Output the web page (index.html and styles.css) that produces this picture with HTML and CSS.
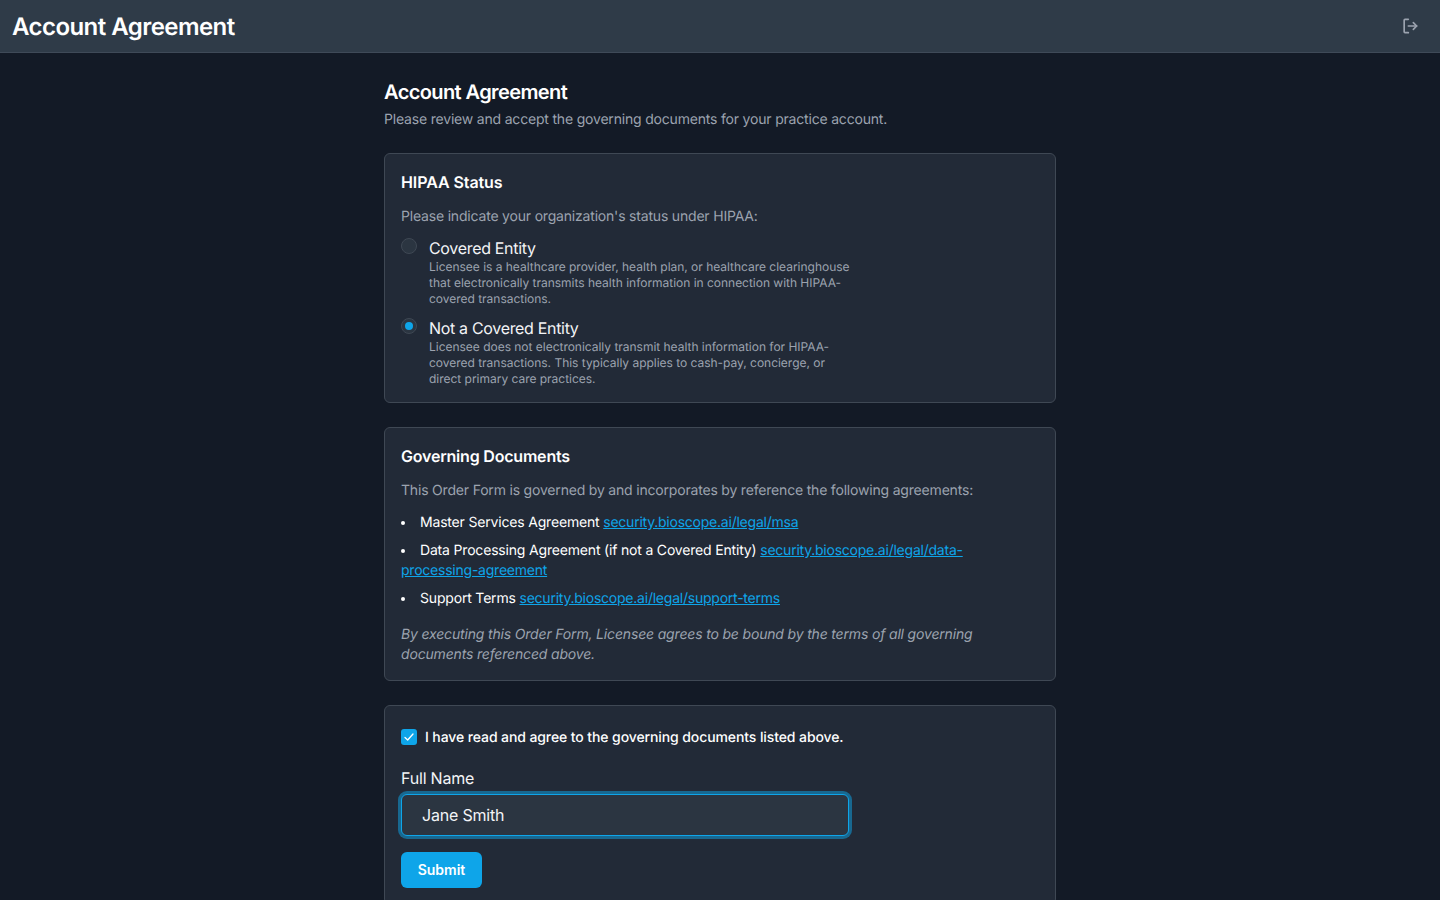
FILE: index.html
```html
<!DOCTYPE html>
<html lang="en">
<head>
<meta charset="utf-8">
<title>Account Agreement</title>
<link rel="stylesheet" href="styles.css">
</head>
<body>
<header class="topbar">
  <h1 class="topbar-title">Account Agreement</h1>
  <button class="icon-btn" type="button" aria-label="Sign out">
    <svg width="20" height="20" viewBox="0 0 24 24" fill="none" stroke="currentColor" stroke-width="2" stroke-linecap="round" stroke-linejoin="round"><path d="M10 4H6a1 1 0 0 0-1 1v14a1 1 0 0 0 1 1h4"/><path d="M10 12h10"/><path d="M16 8l4 4-4 4"/></svg>
  </button>
</header>
<main class="page">
  <h2 class="page-title">Account Agreement</h2>
  <p class="page-sub">Please review and accept the governing documents for your practice account.</p>

  <section class="card">
    <h3 class="card-title">HIPAA Status</h3>
    <p class="muted">Please indicate your organization's status under HIPAA:</p>
    <div class="radio-list">
      <label class="radio-row">
        <span class="radio"></span>
        <span class="radio-text">
          <span class="radio-label">Covered Entity</span>
          <span class="radio-desc">Licensee is a healthcare provider, health plan, or healthcare clearinghouse that electronically transmits health information in connection with HIPAA-covered transactions.</span>
        </span>
      </label>
      <label class="radio-row">
        <span class="radio is-on"></span>
        <span class="radio-text">
          <span class="radio-label">Not a Covered Entity</span>
          <span class="radio-desc">Licensee does not electronically transmit health information for HIPAA-covered transactions. This typically applies to cash-pay, concierge, or direct primary care practices.</span>
        </span>
      </label>
    </div>
  </section>

  <section class="card">
    <h3 class="card-title card-title-wide">Governing Documents</h3>
    <p class="muted">This Order Form is governed by and incorporates by reference the following agreements:</p>
    <ul class="doc-list">
      <li>Master Services Agreement <a href="#">security.bioscope.ai/legal/msa</a></li>
      <li>Data Processing Agreement (if not a Covered Entity) <a href="#">security.bioscope.ai/legal/data-processing-agreement</a></li>
      <li>Support Terms <a href="#">security.bioscope.ai/legal/support-terms</a></li>
    </ul>
    <p class="note">By executing this Order Form, Licensee agrees to be bound by the terms of all governing documents referenced above.</p>
  </section>

  <section class="card">
    <label class="check-row">
      <span class="check">
        <svg width="12" height="12" viewBox="0 0 12 12" fill="none" stroke="#fff" stroke-width="1.3" stroke-linecap="round" stroke-linejoin="round"><path d="M2 6.5 4.7 9 10 3"/></svg>
      </span>
      <span class="check-text">I have read and agree to the governing documents listed above.</span>
    </label>
    <div class="field">
      <label class="field-label" for="name">Full Name</label>
      <input class="field-input" id="name" type="text" value="Jane Smith">
    </div>
    <button class="submit" type="button">Submit</button>
  </section>
</main>
</body>
</html>
```

FILE: styles.css
```css
* { box-sizing: border-box; }
html, body { margin: 0; padding: 0; }
body {
  background: #131a26;
  color: #fff;
  font-family: Inter, "Liberation Sans", sans-serif;
  text-rendering: geometricPrecision;
  min-height: 100vh;
}
.topbar {
  display: flex;
  align-items: center;
  justify-content: space-between;
  height: 53px;
  padding: 0 20px 0 12px;
  background: #2f3b48;
  border-bottom: 1px solid #3f4a58;
}
.topbar-title { margin: 0; padding-top: 2px; font-size: 24px; line-height: 52px; font-weight: 600; letter-spacing: -0.55px; }
.icon-btn { display: flex; padding: 0; border: 0; background: none; color: #9ca3af; }
.page { width: 672px; margin: 0 auto; padding: 24px 0 32px; }
.page-title { margin: 0 0 4px; padding-top: 1px; height: 28px; font-size: 20px; line-height: 28px; font-weight: 600; letter-spacing: -0.6px; }
.page-sub { margin: 0 0 23px; padding-top: 1px; font-size: 14px; line-height: 20px; color: #9ca3af; letter-spacing: -0.19px; }
.card {
  margin-bottom: 24px;
  padding: 16px;
  background: #222a37;
  border: 1px solid #3f4854;
  border-radius: 6px;
}
.card-title { margin: 0 0 12px; font-size: 16px; line-height: 24px; font-weight: 600; letter-spacing: -0.08px; }
.card-title-wide { letter-spacing: -0.2px; }
.muted { margin: 0 0 11px; padding-top: 1px; font-size: 14px; line-height: 20px; color: #9ca3af; letter-spacing: -0.19px; }
.radio-list { display: flex; flex-direction: column; gap: 11px; margin-bottom: -1px; }
.radio-row { display: flex; gap: 12px; align-items: flex-start; height: 69px; }
.radio {
  flex: none;
  display: flex;
  align-items: center;
  justify-content: center;
  width: 16px;
  height: 16px;
  border: 1px solid #3f4854;
  border-radius: 50%;
  background: #2b3541;
}
.radio.is-on::after {
  content: "";
  width: 8px;
  height: 8px;
  border-radius: 50%;
  background: #0ea5e9;
}
.radio-text { display: block; max-width: 424px; }
.radio-label { display: block; font-size: 16px; line-height: 20px; color: #f3f4f6; letter-spacing: -0.32px; }
.radio-desc { display: block; margin-top: 1px; font-size: 12px; line-height: 16px; color: #9ca3af; letter-spacing: -0.02px; }
.doc-list { margin: 0 0 16px; padding: 1px 4px 0 0; list-style: disc inside; font-size: 14px; line-height: 20px; letter-spacing: -0.18px; }
.doc-list li + li { margin-top: 8px; }
.doc-list a { color: #0ea5e9; letter-spacing: -0.23px; }
.note { margin: 0 0 -1px; font-size: 14px; line-height: 20px; font-style: italic; color: #9ca3af; letter-spacing: -0.17px; }
.check-row { display: flex; align-items: center; gap: 8px; font-size: 14px; line-height: 20px; font-weight: 500; margin-top: 5px; letter-spacing: -0.1px; }
.check-text { display: block; height: 20px; padding-top: 1px; }
.check {
  display: flex;
  align-items: center;
  justify-content: center;
  width: 16px;
  height: 16px;
  background: #0ea5e9;
  border-radius: 3px;
}
.field { margin-top: 21px; width: 448px; }
.field-label { display: block; font-size: 16px; line-height: 20px; margin-bottom: 6px; color: #f3f4f6; letter-spacing: -0.2px; }
.field-input {
  display: block;
  width: 100%;
  height: 42px;
  padding: 0 20px;
  background: #2b3541;
  border: 1px solid #0ea5e9;
  border-radius: 6px;
  box-shadow: 0 0 0 3px rgba(14, 165, 233, 0.5);
  outline: none;
  color: #f3f4f6;
  font: 400 16px Inter, "Liberation Sans", sans-serif;
  letter-spacing: -0.2px;
}
.submit {
  display: block;
  margin-top: 16px;
  padding: 0 0 2px;
  width: 81px;
  height: 36px;
  border: 0;
  border-radius: 6px;
  background: #0ea5e9;
  color: #fff;
  font: 600 14px Inter, "Liberation Sans", sans-serif;
}
```
